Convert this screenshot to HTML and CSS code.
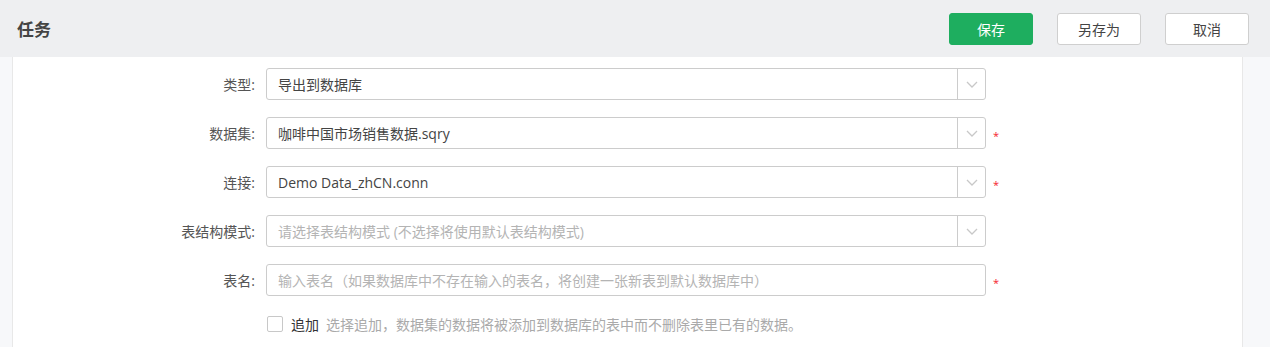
FILE: index.html
```html
<!DOCTYPE html>
<html lang="zh-CN">
<head>
    <meta charset="UTF-8">
    <title>任务</title>
    <link rel="stylesheet" href="styles.css">
</head>
<body>
    <div class="header">
        <div class="title">任务</div>
        <div class="actions">
            <button class="btn btn-primary">保存</button>
            <button class="btn">另存为</button>
            <button class="btn">取消</button>
        </div>
    </div>

    <div class="panel">
        <div class="form-row">
            <label class="form-label">类型:</label>
            <div class="select">
                <span class="select-value">导出到数据库</span>
                <span class="select-arrow"><svg width="12" height="7" viewBox="0 0 12 7"><path d="M1 1l5 5 5-5" fill="none" stroke="#c8c8c8" stroke-width="1.3"/></svg></span>
            </div>
        </div>

        <div class="form-row">
            <label class="form-label">数据集:</label>
            <div class="select">
                <span class="select-value">咖啡中国市场销售数据.sqry</span>
                <span class="select-arrow"><svg width="12" height="7" viewBox="0 0 12 7"><path d="M1 1l5 5 5-5" fill="none" stroke="#c8c8c8" stroke-width="1.3"/></svg></span>
            </div>
            <span class="required">*</span>
        </div>

        <div class="form-row">
            <label class="form-label">连接:</label>
            <div class="select">
                <span class="select-value">Demo Data_zhCN.conn</span>
                <span class="select-arrow"><svg width="12" height="7" viewBox="0 0 12 7"><path d="M1 1l5 5 5-5" fill="none" stroke="#c8c8c8" stroke-width="1.3"/></svg></span>
            </div>
            <span class="required">*</span>
        </div>

        <div class="form-row">
            <label class="form-label">表结构模式:</label>
            <div class="select">
                <span class="select-value placeholder">请选择表结构模式 (不选择将使用默认表结构模式)</span>
                <span class="select-arrow"><svg width="12" height="7" viewBox="0 0 12 7"><path d="M1 1l5 5 5-5" fill="none" stroke="#c8c8c8" stroke-width="1.3"/></svg></span>
            </div>
        </div>

        <div class="form-row">
            <label class="form-label">表名:</label>
            <input class="text-input" type="text" placeholder="输入表名（如果数据库中不存在输入的表名，将创建一张新表到默认数据库中）">
            <span class="required">*</span>
        </div>

        <div class="check-row">
            <span class="checkbox"></span>
            <span class="check-label">追加</span>
            <span class="check-hint">选择追加，数据集的数据将被添加到数据库的表中而不删除表里已有的数据。</span>
        </div>
    </div>
</body>
</html>
```

FILE: styles.css
```css
body {
    margin: 0;
    font-family: "Open Sans", "Noto Sans CJK SC", sans-serif;
    font-size: 14px;
    color: #333;
    background-color: #f7f8fa;
}
.header {
    height: 57px;
    background-color: #eeeff1;
    display: flex;
    align-items: center;
    justify-content: space-between;
    padding: 0 21px 0 17px;
}
.title {
    font-size: 17px;
    font-weight: bold;
    color: #444;
}
.actions {
    display: flex;
    gap: 24px;
}
.btn {
    width: 84px;
    height: 32px;
    border: 1px solid #cfcfcf;
    border-radius: 3px;
    background-color: white;
    color: #444;
    font-family: inherit;
    font-size: 14px;
    cursor: pointer;
}
.btn-primary {
    background-color: #1eae5f;
    border-color: #1eae5f;
    color: white;
}
.panel {
    margin: 0 27px 0 12px;
    background-color: white;
    border-left: 1px solid #e8e8e8;
    border-right: 1px solid #e8e8e8;
    padding: 11px 0 17px 0;
}
.form-row {
    display: flex;
    align-items: center;
    height: 32px;
    margin-bottom: 17px;
}
.form-label {
    width: 242px;
    text-align: right;
    color: #555;
    padding-right: 11px;
}
.select, .text-input {
    box-sizing: border-box;
    width: 720px;
    height: 32px;
    border: 1px solid #ccc;
    border-radius: 3px;
    background-color: white;
}
.select {
    display: flex;
    align-items: center;
}
.select-value {
    flex: 1;
    padding-left: 11px;
    color: #444;
}
.placeholder {
    color: #b4b4b4;
}
.select-arrow {
    width: 27px;
    height: 100%;
    border-left: 1px solid #ccc;
    display: flex;
    align-items: center;
    justify-content: center;
}
.text-input {
    padding: 0 11px;
    font-family: inherit;
    font-size: 14px;
    color: #444;
    outline: none;
}
.text-input::placeholder {
    color: #b4b4b4;
}
.required {
    color: #f5222d;
    font-size: 11px;
    margin-left: 7px;
    padding-top: 4px;
}
.check-row {
    display: flex;
    align-items: center;
    margin-left: 254px;
    margin-top: 20px;
    height: 16px;
}
.checkbox {
    box-sizing: border-box;
    width: 16px;
    height: 16px;
    border: 1px solid #c8c8c8;
    border-radius: 2px;
}
.check-label {
    margin-left: 8px;
    color: #333;
}
.check-hint {
    margin-left: 7px;
    color: #aaa;
}
```
